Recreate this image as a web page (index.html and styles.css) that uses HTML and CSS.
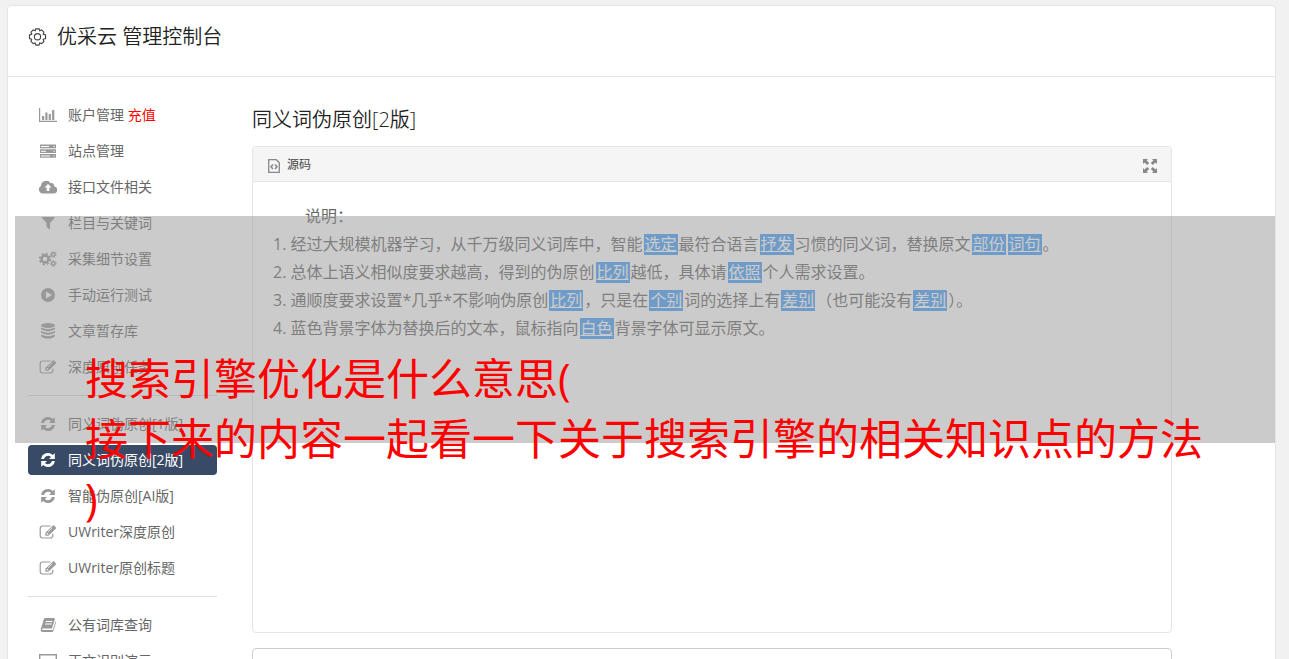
FILE: index.html
```html
<!DOCTYPE html>
<html lang="zh-CN">
<head>
    <meta charset="UTF-8">
    <meta name="viewport" content="width=device-width, initial-scale=1.0">
    <title>优采云 管理控制台</title>
    <link rel="stylesheet" href="styles.css">
</head>
<body>
    <!-- shared icons -->
    <svg class="sprite" aria-hidden="true">
        <symbol id="i-refresh" viewBox="0 0 16 16">
            <path d="M1.200 7A6.800 6.800 0 0 1 12.800 3L14.800 1.200V7H9l2-2A4.200 4.200 0 0 0 4 7zM14.800 9A6.800 6.800 0 0 1 3.200 13L1.200 14.800V9H7l-2 2A4.200 4.200 0 0 0 12 9z"/>
        </symbol>
        <symbol id="i-edit" viewBox="0 0 18 16">
            <path d="M11.500 2H3.600A2.500 2.500 0 0 0 1.200 4.500v7A2.500 2.500 0 0 0 3.600 14h7.700a2.500 2.500 0 0 0 2.500-2.500V9.800" fill="none" stroke="currentColor" stroke-width="1.200"/>
            <path d="M14.500 1l2.900 2.900-7.900 7.800H6.400V8.800zM7.700 9.200v1.200h1.200v.6l.8-.8-1.500-1.500zM9.300 8l4.300-4.200-.4-.4L8.900 7.600z" fill-rule="evenodd"/>
        </symbol>
        <symbol id="i-chart" viewBox="0 0 18 16">
            <path d="M0 1h1.200v12.800H18V15H0zM3 9h2.200v4H3zM6.300 5.500h2.200V13H6.300zM9.700 7h2.200v6H9.700zM13.100 3h2.200v10h-2.200z"/>
        </symbol>
        <symbol id="i-server" viewBox="0 0 16 16">
            <path d="M0 1.500h16v3.800H0zM0 6.300h16v3.700H0zM0 11h16v3.700H0zM1 3v1h8V3zM1 7.700v1h5v-1zM1 12.400v1h9v-1zM13.500 3v1h1.200V3zM13.500 7.700v1h1.200v-1zM13.500 12.400v1h1.200v-1z" fill-rule="evenodd"/>
        </symbol>
        <symbol id="i-cloud" viewBox="0 0 18 16">
            <path d="M4 14.500a4 4 0 0 1-2-7.500A5.200 5.200 0 0 1 11.600 4.200a2.700 2.700 0 0 1 3.500 3.300A3.500 3.500 0 0 1 14.300 14.500zM7.700 12h2.600V8.500h2.200L9 5 5.500 8.500h2.200z" fill-rule="evenodd"/>
        </symbol>
        <symbol id="i-filter" viewBox="0 0 16 16">
            <path d="M2 2h12.500v1L10 8v6.500L6.500 12V8L2 3z"/>
        </symbol>
        <symbol id="i-cogs" viewBox="0 0 18 16">
            <g fill="none" stroke="currentColor">
                <circle cx="6" cy="8" r="3.500" stroke-width="2.400"/>
                <circle cx="6" cy="8" r="5.300" stroke-width="1.800" stroke-dasharray="2.080"/>
                <circle cx="14.300" cy="3.500" r="1.800" stroke-width="1.400"/>
                <circle cx="14.300" cy="3.500" r="2.800" stroke-width="1" stroke-dasharray="1.260"/>
                <circle cx="14.300" cy="12.500" r="1.800" stroke-width="1.400"/>
                <circle cx="14.300" cy="12.500" r="2.800" stroke-width="1" stroke-dasharray="1.260"/>
            </g>
        </symbol>
        <symbol id="i-play" viewBox="0 0 16 16">
            <path d="M8 1a7 7 0 1 0 0 14A7 7 0 0 0 8 1zM6 4.500L12 8l-6 3.500z" fill-rule="evenodd"/>
        </symbol>
        <symbol id="i-database" viewBox="0 0 16 16">
            <ellipse cx="8" cy="2.500" rx="7" ry="2.500"/>
            <path d="M1 4.500q7 3.500 14 0v1.800q-7 4-14 0zM1 8q7 3.500 14 0v1.800q-7 4-14 0zM1 11.500q7 3.500 14 0v2q-7 4.500-14 0z"/>
        </symbol>
        <symbol id="i-book" viewBox="0 0 16 16">
            <path d="M5 1h9q1.200.2.800 1.500L12 11.500H3q-1.300.3-.8 1.500H13l2.500-8.800q.7.700.3 1.800L13.400 14q-.3 1-1.500 1H2.500Q.2 14.500.8 12L3.700 2.500Q4 1.200 5 1zM6 4l-.3 1h6.600l.3-1zM5.300 6.500L5 7.500h6.600l.3-1z" fill-rule="evenodd"/>
        </symbol>
        <symbol id="i-laptop" viewBox="0 0 18 16">
            <path d="M.7 1.700h16.600v10H.7zM0 14h18" fill="none" stroke="currentColor" stroke-width="1.400"/>
        </symbol>
    </svg>

    <div class="page">
        <div class="card">
            <header class="card-header">
                <svg class="gear" viewBox="0 0 20 20" aria-hidden="true">
                    <path d="M8.200 1.500h3.600l.6 2 2-.9 2.300 2.300-.7 2.100 2.500.8v3.800l-2.500.8.7 2.300-2.400 2.300-2-.8-.7 2.300H8.300l-.8-2.300-2 .8-2.400-2.300.8-2.300-2.300-.8V7.800L4 7l-.8-2.100 2.300-2.300 2 .9z"/>
                    <circle cx="10" cy="9.700" r="3.300"/>
                </svg>
                <h1>优采云 管理控制台</h1>
            </header>

            <div class="content">
                <nav class="sidebar">
                    <ul>
                        <li><a href="#"><svg class="icon"><use href="#i-chart"/></svg>账户管理 <span class="recharge">充值</span></a></li>
                        <li><a href="#"><svg class="icon"><use href="#i-server"/></svg>站点管理</a></li>
                        <li><a href="#"><svg class="icon"><use href="#i-cloud"/></svg>接口文件相关</a></li>
                        <li><a href="#"><svg class="icon"><use href="#i-filter"/></svg>栏目与关键词</a></li>
                        <li><a href="#"><svg class="icon"><use href="#i-cogs"/></svg>采集细节设置</a></li>
                        <li><a href="#"><svg class="icon"><use href="#i-play"/></svg>手动运行测试</a></li>
                        <li><a href="#"><svg class="icon"><use href="#i-database"/></svg>文章暂存库</a></li>
                        <li><a href="#"><svg class="icon"><use href="#i-edit"/></svg>深度原创任务</a></li>
                    </ul>
                    <ul>
                        <li><a href="#"><svg class="icon"><use href="#i-refresh"/></svg>同义词伪原创[1版]</a></li>
                        <li><a href="#" class="active"><svg class="icon"><use href="#i-refresh"/></svg>同义词伪原创[2版]</a></li>
                        <li><a href="#"><svg class="icon"><use href="#i-refresh"/></svg>智能伪原创[AI版]</a></li>
                        <li><a href="#"><svg class="icon"><use href="#i-edit"/></svg>UWriter深度原创</a></li>
                        <li><a href="#"><svg class="icon"><use href="#i-edit"/></svg>UWriter原创标题</a></li>
                    </ul>
                    <ul>
                        <li><a href="#"><svg class="icon"><use href="#i-book"/></svg>公有词库查询</a></li>
                        <li><a href="#"><svg class="icon"><use href="#i-laptop"/></svg>正文识别演示</a></li>
                    </ul>
                </nav>

                <main class="main">
                    <h2>同义词伪原创[2版]</h2>
                    <div class="editor">
                        <div class="toolbar">
                            <button type="button" class="source-btn">
                                <svg viewBox="0 0 12 14" aria-hidden="true">
                                    <path d="M.7.700h7.600l3 3v9.600H.7z"/>
                                    <path d="M5 5.500L3 7.800 5 10M7 5.500l2 2.300L7 10" stroke-width="1.500"/>
                                </svg>
                                源码
                            </button>
                            <button type="button" class="expand-btn" aria-label="全屏">
                                <svg viewBox="0 0 14 14" aria-hidden="true">
                                    <path d="M0 0h5L3.600 1.500l2.600 2.600-2 2-2.700-2.500L0 5zM14 0v5l-1.500-1.400-2.700 2.500-2-2 2.600-2.600L9 0zM0 14V9l1.500 1.400 2.700-2.500 2 2-2.600 2.600L5 14zM14 14H9l1.400-1.500-2.600-2.600 2-2 2.700 2.500L14 9z"/>
                                </svg>
                            </button>
                        </div>
                        <div class="editor-body">
                            <p class="intro">说明：</p>
                            <p>1. 经过大规模机器学习，从千万级同义词库中，智能<mark>选定</mark>最符合语言<mark>抒发</mark>习惯的同义词，替换原文<mark>部份</mark><mark>词句</mark>。</p>
                            <p>2. 总体上语义相似度要求越高，得到的伪原创<mark>比列</mark>越低，具体请<mark>依照</mark>个人需求设置。</p>
                            <p>3. 通顺度要求设置*几乎*不影响伪原创<mark>比列</mark>，只是在<mark>个别</mark>词的选择上有<mark>差别</mark>（也可能没有<mark>差别</mark>）。</p>
                            <p>4. 蓝色背景字体为替换后的文本，鼠标指向<mark>白色</mark>背景字体可显示原文。</p>
                        </div>
                    </div>
                    <textarea class="result" aria-label="结果"></textarea>
                </main>
            </div>
        </div>

        <div class="banner">
            <p>搜索引擎优化是什么意思(<br>接下来的内容一起看一下关于搜索引擎的相关知识点的方法<br>)</p>
        </div>
    </div>
</body>
</html>
```

FILE: styles.css
```css
* {
    box-sizing: border-box;
}

body {
    margin: 0;
    background: #f1f1f1;
    color: #666;
    font-family: "Open Sans", "Noto Sans CJK SC", sans-serif;
    font-size: 14px;
}

h1, h2, p, ul {
    margin: 0;
    padding: 0;
}

button {
    border: none;
    padding: 0;
    background: none;
    color: inherit;
    font-family: inherit;
    cursor: pointer;
}

.sprite {
    display: none;
}

.page {
    position: relative;
    height: 100vh;
    padding: 5px 13px 0 7px;
    overflow: hidden;
}

.card {
    background: #fff;
    border: 1px solid #e5e5e5;
    border-radius: 4px;
}

.card-header {
    display: flex;
    align-items: center;
    gap: 10px;
    height: 71px;
    padding: 0 20px 8px;
    border-bottom: 1px solid #e5e5e5;
    color: #333;
}

.gear {
    width: 19px;
    height: 20px;
    fill: none;
    stroke: #444;
    stroke-width: 1.2;
}

h1, h2 {
    color: #222;
    font-size: 20px;
    font-weight: 350;
    line-height: 28px;
}

.content {
    display: flex;
    gap: 35px;
    padding: 23px 103px 20px 20px;
}

/* sidebar */
.sidebar {
    flex: 0 0 189px;
}

.sidebar ul {
    list-style: none;
}

.sidebar ul + ul {
    margin-top: 13px;
    padding-top: 13px;
    border-top: 1px solid #ddd;
}

.sidebar li {
    margin-bottom: 6px;
}

.sidebar a {
    display: flex;
    align-items: center;
    height: 30px;
    padding-left: 11px;
    border-radius: 4px;
    color: #666;
    line-height: 30px;
    text-decoration: none;
    white-space: pre;
}

.icon {
    width: 18px;
    height: 16px;
    margin-right: 11px;
    color: #999;
    fill: currentColor;
}

.recharge {
    color: #f00;
}

.sidebar .active,
.active .icon {
    color: #fff;
}

.sidebar .active {
    background: #394a66;
}

/* editor */
.main {
    flex: 1;
    min-width: 0;
    padding-top: 6px;
}

.editor {
    margin-top: 12px;
    border: 1px solid #e5e5e5;
    border-radius: 4px;
}

.toolbar {
    display: flex;
    justify-content: space-between;
    align-items: center;
    height: 35px;
    padding: 0 14px 0 15px;
    background: #f5f5f5;
    border-bottom: 1px solid #e5e5e5;
    border-radius: 4px 4px 0 0;
}

.source-btn {
    display: flex;
    align-items: center;
    gap: 7px;
    color: #444;
    font-size: 12px;
}

.source-btn svg {
    width: 12px;
    height: 14px;
    margin-top: 4px;
    fill: none;
    stroke: #888;
    stroke-width: 1.3;
}

.expand-btn svg {
    display: block;
    width: 14px;
    height: 14px;
    margin-top: 4px;
    fill: #888;
}

.editor-body {
    min-height: 450px;
    padding: 20px;
    font-size: 16px;
    line-height: 28px;
}

.intro {
    text-indent: 2em;
}

mark {
    margin: 0 1px;
    padding: 0 1px;
    background: linear-gradient(#459ef9, #459ef9) center / 100% 21px no-repeat;
    color: #fff;
    text-decoration: underline;
}

.result {
    display: block;
    width: 100%;
    height: 100px;
    margin-top: 15px;
    border: 1px solid #ccc;
    border-radius: 4px;
    resize: none;
}

/* title laid over the page */
.banner {
    position: absolute;
    top: 216px;
    left: 15px;
    right: 14px;
    height: 227px;
    padding: 133px 0 0 70px;
    background: rgba(151, 151, 151, 0.5);
    color: #f00;
    font-size: 43px;
    line-height: 60px;
    white-space: nowrap;
}
```
